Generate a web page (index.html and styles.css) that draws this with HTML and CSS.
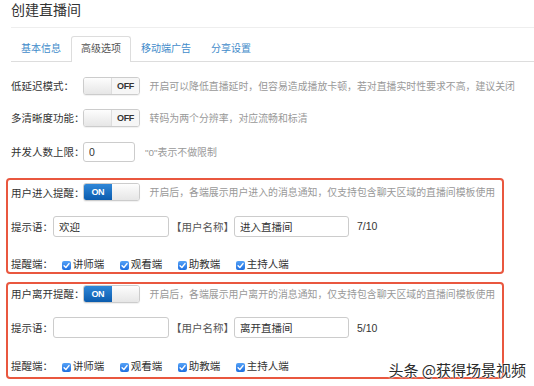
FILE: index.html
```html
<!DOCTYPE html>
<html lang="zh-CN">
<head>
    <meta charset="UTF-8">
    <meta name="viewport" content="width=device-width, initial-scale=1.0">
    <title>创建直播间</title>
    <link rel="stylesheet" href="styles.css">
</head>
<body>
    <div class="page">
        <h1 class="page-title">创建直播间</h1>

        <ul class="tabs">
            <li class="tab">基本信息</li>
            <li class="tab active">高级选项</li>
            <li class="tab">移动端广告</li>
            <li class="tab">分享设置</li>
        </ul>

        <div class="form">
            <div class="row">
                <span class="label label-fixed">低延迟模式：</span>
                <span class="switch">
                    <span class="switch-side switch-blank"></span>
                    <span class="switch-side switch-off">OFF</span>
                </span>
                <span class="hint">开启可以降低直播延时，但容易造成播放卡顿，若对直播实时性要求不高，建议关闭</span>
            </div>

            <div class="row">
                <span class="label label-fixed">多清晰度功能：</span>
                <span class="switch">
                    <span class="switch-side switch-blank"></span>
                    <span class="switch-side switch-off">OFF</span>
                </span>
                <span class="hint">转码为两个分辨率，对应流畅和标清</span>
            </div>

            <div class="row row-limit">
                <span class="label label-fixed">并发人数上限：</span>
                <input class="input input-limit" type="text" value="0">
                <span class="hint hint-limit">"0"表示不做限制</span>
            </div>

            <!-- 用户进入提醒 -->
            <div class="notice-box">
                <div class="row">
                    <span class="label label-fixed">用户进入提醒：</span>
                    <span class="switch">
                        <span class="switch-side switch-on">ON</span>
                        <span class="switch-side switch-blank"></span>
                    </span>
                    <span class="hint">开启后，各端展示用户进入的消息通知，仅支持包含聊天区域的直播间模板使用</span>
                </div>
                <div class="row row-fields">
                    <span class="label">提示语：</span>
                    <input class="input input-prefix" type="text" value="欢迎">
                    <span class="name-tag">【用户名称】</span>
                    <input class="input input-suffix" type="text" value="进入直播间">
                    <span class="count">7/10</span>
                </div>
                <div class="row row-check">
                    <span class="label">提醒端：</span>
                    <div class="checks">
                        <span class="check"><span class="check-box"><svg viewBox="0 0 10 10"><path d="M2.3 5.3 L4.3 7.3 L7.8 2.9"/></svg></span>讲师端</span>
                        <span class="check"><span class="check-box"><svg viewBox="0 0 10 10"><path d="M2.3 5.3 L4.3 7.3 L7.8 2.9"/></svg></span>观看端</span>
                        <span class="check"><span class="check-box"><svg viewBox="0 0 10 10"><path d="M2.3 5.3 L4.3 7.3 L7.8 2.9"/></svg></span>助教端</span>
                        <span class="check"><span class="check-box"><svg viewBox="0 0 10 10"><path d="M2.3 5.3 L4.3 7.3 L7.8 2.9"/></svg></span>主持人端</span>
                    </div>
                </div>
            </div>

            <!-- 用户离开提醒 -->
            <div class="notice-box">
                <div class="row">
                    <span class="label label-fixed">用户离开提醒：</span>
                    <span class="switch">
                        <span class="switch-side switch-on">ON</span>
                        <span class="switch-side switch-blank"></span>
                    </span>
                    <span class="hint">开启后，各端展示用户离开的消息通知，仅支持包含聊天区域的直播间模板使用</span>
                </div>
                <div class="row row-fields">
                    <span class="label">提示语：</span>
                    <input class="input input-prefix" type="text" value="">
                    <span class="name-tag">【用户名称】</span>
                    <input class="input input-suffix" type="text" value="离开直播间">
                    <span class="count">5/10</span>
                </div>
                <div class="row row-check">
                    <span class="label">提醒端：</span>
                    <div class="checks">
                        <span class="check"><span class="check-box"><svg viewBox="0 0 10 10"><path d="M2.3 5.3 L4.3 7.3 L7.8 2.9"/></svg></span>讲师端</span>
                        <span class="check"><span class="check-box"><svg viewBox="0 0 10 10"><path d="M2.3 5.3 L4.3 7.3 L7.8 2.9"/></svg></span>观看端</span>
                        <span class="check"><span class="check-box"><svg viewBox="0 0 10 10"><path d="M2.3 5.3 L4.3 7.3 L7.8 2.9"/></svg></span>助教端</span>
                        <span class="check"><span class="check-box"><svg viewBox="0 0 10 10"><path d="M2.3 5.3 L4.3 7.3 L7.8 2.9"/></svg></span>主持人端</span>
                    </div>
                </div>
            </div>
        </div>

        <div class="watermark">头条 @获得场景视频</div>
    </div>
</body>
</html>
```

FILE: styles.css
```css
/* Base */
body {
    margin: 0;
    font-family: "Liberation Sans", "Noto Sans CJK SC", sans-serif;
    color: #333;
    background: #fff;
}

.page {
    position: relative;
    width: 534px;
    height: 386px;
    padding-left: 11px;
    box-sizing: border-box;
    overflow: hidden;
}

.page-title {
    margin: 0;
    height: 27px;
    font-size: 14px;
    font-weight: normal;
    line-height: 20px;
    color: #333;
    border-bottom: 1px solid #eee;
}

/* Tabs */
.tabs {
    display: flex;
    align-items: flex-start;
    list-style: none;
    margin: 8px 0 0;
    padding: 0;
    height: 25px;
    border-bottom: 1px solid #ddd;
}

.tab {
    height: 25px;
    box-sizing: border-box;
    padding: 0 9px;
    font-size: 10px;
    line-height: 24px;
    color: #428bca;
    border: 1px solid transparent;
    border-bottom: none;
    border-radius: 3px 3px 0 0;
}

.tab.active {
    height: 26px;
    color: #555;
    background: #fff;
    border-color: #ddd;
}

/* Form rows */
.form {
    padding-top: 13.5px;
}

.row {
    display: flex;
    align-items: center;
    height: 20px;
    font-size: 10.5px;
    white-space: nowrap;
}

.form > .row + .row {
    margin-top: 12px;
}

.form > .row-limit {
    margin-top: 14px !important;
}

.label {
    flex-shrink: 0;
    color: #333;
}

.label-fixed {
    width: 72px;
}

.hint {
    margin-left: 9.5px;
    font-size: 9.9px;
    color: #999;
}

.hint-limit {
    margin-left: 10px;
}

/* Switch */
.switch {
    display: flex;
    flex-shrink: 0;
    width: 57px;
    height: 18px;
    box-sizing: border-box;
    border: 1px solid #ccc;
    border-radius: 3px;
    overflow: hidden;
    box-shadow: 0 1px 1px rgba(0, 0, 0, 0.06);
}

.switch-side {
    display: flex;
    align-items: center;
    justify-content: center;
    width: 28px;
    font-size: 9px;
    font-weight: bold;
    letter-spacing: -0.4px;
}

.switch-blank {
    background: linear-gradient(#fdfdfd, #e6e6e6);
}

.switch-off {
    color: #333;
    background: #f6f6f6;
    border-left: 1px solid #ddd;
}

.switch-on {
    color: #fff;
    background: linear-gradient(#2f87d8, #0b5cae);
}

/* Inputs */
.input {
    height: 100%;
    box-sizing: border-box;
    margin: 0;
    padding: 0 5px;
    font-family: inherit;
    font-size: 10.5px;
    color: #333;
    background: #fff;
    border: 1px solid #ccc;
    border-radius: 3px;
    outline: none;
}

.input-limit {
    width: 52px;
}

.input-prefix {
    width: 116px;
}

.input-suffix {
    width: 115px;
}

.name-tag {
    margin-left: 2px;
    color: #555;
}

.count {
    margin-left: 8px;
    color: #333;
}

/* Notice boxes */
.notice-box {
    margin: 16px 30px 0 -5px;
    padding: 2.5px 3px 0;
    border: 2px solid #e9573f;
    border-radius: 4px;
}

.notice-box + .notice-box {
    margin-top: 8px;
    padding: 0 3px 3.5px;
}

.row-fields {
    height: 21px;
    margin-top: 13.5px;
}

.row-check {
    height: 16px;
    margin-top: 19.3px;
}

.checks {
    display: flex;
    gap: 15.5px;
    margin-left: 8.7px;
}

.check {
    display: flex;
    align-items: center;
    gap: 2px;
    color: #333;
}

.check-box {
    display: flex;
    width: 9px;
    height: 9px;
    position: relative;
    top: 1.5px;
    border-radius: 2px;
    background: linear-gradient(#55a2f7, #1f6fe0);
}

.check-box svg {
    width: 9px;
    height: 9px;
}

.check-box path {
    fill: none;
    stroke: #fff;
    stroke-width: 1.6;
    stroke-linecap: round;
    stroke-linejoin: round;
}

/* Watermark overlay */
.watermark {
    position: absolute;
    right: 8px;
    bottom: 7px;
    font-family: "Noto Sans CJK SC", sans-serif;
    font-size: 15px;
    line-height: 18px;
    color: #2b2b2b;
    text-shadow: 0 0 2px #fff, 0 0 2px #fff, 0 0 1px #fff;
}
```
